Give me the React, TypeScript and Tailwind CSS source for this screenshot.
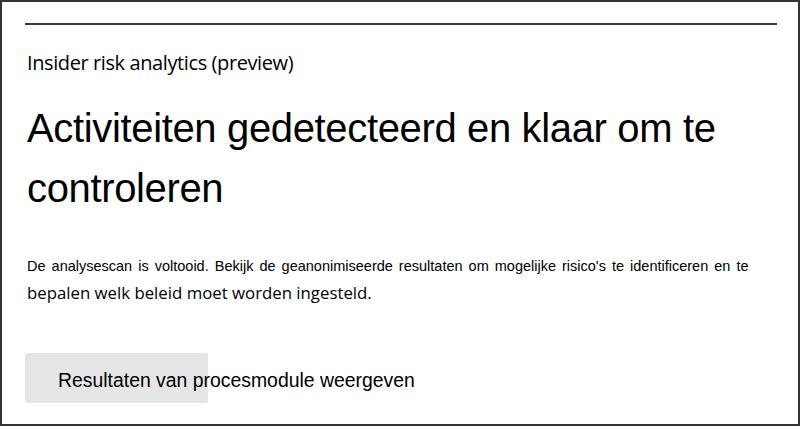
import React from 'react';

export default function App() {
  return (
    <div className="w-[800px] h-[426px] bg-white border-2 border-[#333] overflow-hidden font-['Liberation_Sans',Arial,sans-serif] text-black">
      <div className="ml-[23px] mr-[21px] mt-[21px] h-[2px] bg-[#3a3a3a]" />

      <div className="pl-[25px]">
        <p className="mt-[25px] text-[20px] leading-[26px] font-['Open_Sans',sans-serif] tracking-[-0.4px]">
          Insider risk analytics (preview)
        </p>

        <h1 className="mt-[22px] text-[40px] leading-[60px] tracking-[-0.35px]">
          Activiteiten gedetecteerd en klaar om te
          <br />
          controleren
        </h1>

        <p className="mt-[38px] text-[14.5px] leading-[20px] [word-spacing:2px]">
          De analysescan is voltooid. Bekijk de geanonimiseerde resultaten om mogelijke risico's te identificeren en te
        </p>
        <p className="mt-[5px] text-[16.8px] leading-[24px] font-['Open_Sans',sans-serif] font-medium">
          bepalen welk beleid moet worden ingesteld.
        </p>

        <div className="mt-[48px] relative h-[50px] w-[181px]">
          <div className="absolute inset-0 -left-[2px] bg-[#e6e6e6] rounded-[2px]" />
          <span className="absolute left-[31px] top-[15px] whitespace-nowrap text-[19.4px] leading-[24px]">
            Resultaten van procesmodule weergeven
          </span>
        </div>
      </div>
    </div>
  );
}
